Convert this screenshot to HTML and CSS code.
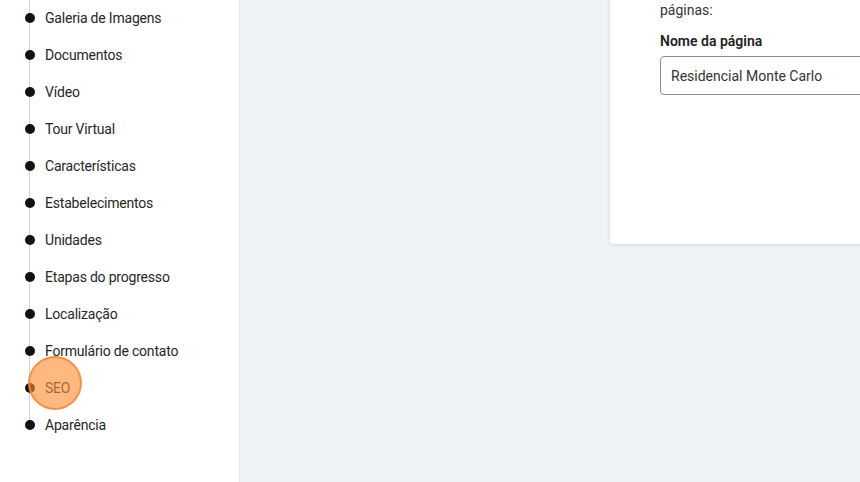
FILE: index.html
```html
<!DOCTYPE html>
<html lang="pt-BR">
<head>
    <meta charset="UTF-8">
    <meta name="viewport" content="width=device-width, initial-scale=1.0">
    <title>Editar página</title>
    <link rel="stylesheet" href="styles.css">
</head>
<body>
    <div class="layout">
        <aside class="sidebar">
            <ul class="steps">
                <li class="step">Galeria de Imagens</li>
                <li class="step">Documentos</li>
                <li class="step">Vídeo</li>
                <li class="step">Tour Virtual</li>
                <li class="step">Características</li>
                <li class="step">Estabelecimentos</li>
                <li class="step">Unidades</li>
                <li class="step">Etapas do progresso</li>
                <li class="step">Localização</li>
                <li class="step">Formulário de contato</li>
                <li class="step">SEO<span class="cursor"></span></li>
                <li class="step">Aparência</li>
            </ul>
        </aside>
        <main class="main">
            <section class="card">
                <p class="hint">Informe o nome que será exibido no topo das<br>páginas:</p>
                <label class="label" for="page-name">Nome da página</label>
                <input class="input" id="page-name" type="text" value="Residencial Monte Carlo">
            </section>
        </main>
    </div>
</body>
</html>
```

FILE: styles.css
```css
body {
    margin: 0;
    font-family: Roboto, "Noto Sans", sans-serif;
    color: #333;
    background: #eff2f7;
    overflow: hidden;
}
.layout {
    display: flex;
    height: 482px;
}
.sidebar {
    width: 239px;
    flex-shrink: 0;
    background: #fff;
    border-right: 1px solid #e4e6ea;
}
.steps {
    position: relative;
    list-style: none;
    margin: -1px 0 0 29px;
    padding: 0;
}
.steps::before {
    content: "";
    position: absolute;
    left: 0;
    top: 0;
    bottom: 20px;
    border-left: 1px solid #d4d4d4;
}
.step {
    position: relative;
    display: flex;
    align-items: center;
    height: 37px;
    padding-left: 16px;
    font-size: 14px;
    letter-spacing: -0.2px;
    color: #262626;
}
.step::before {
    content: "";
    position: absolute;
    left: -4px;
    top: 14px;
    width: 10px;
    height: 10px;
    border-radius: 50%;
    background: #150f1a;
}
.cursor {
    position: absolute;
    left: -1px;
    top: -13px;
    width: 50px;
    height: 50px;
    border-radius: 50%;
    background: rgba(255, 140, 50, 0.62);
    border: 2px solid rgba(244, 140, 60, 0.9);
}
.main {
    flex: 1;
    min-width: 0;
    overflow: hidden;
    padding-left: 370px;
}
.card {
    width: 520px;
    background: #fff;
    margin-top: -20px;
    height: 264px;
    border-radius: 4px;
    box-shadow: 0 1px 4px rgba(0, 0, 0, 0.12);
    padding: 0 0 0 50px;
    box-sizing: border-box;
}
.hint {
    margin: 0;
    font-size: 14px;
    line-height: 18px;
    color: #333;
    padding-top: 3px;
    white-space: nowrap;
}
.label {
    display: block;
    margin-top: 14px;
    font-size: 14px;
    font-weight: 600;
    color: #222;
}
.input {
    display: block;
    margin-top: 7px;
    width: 420px;
    height: 39px;
    box-sizing: border-box;
    border: 1px solid #8c8c8c;
    border-radius: 4px;
    padding: 0 10px;
    font-family: inherit;
    font-size: 14px;
    color: #333;
    outline: none;
}
```
